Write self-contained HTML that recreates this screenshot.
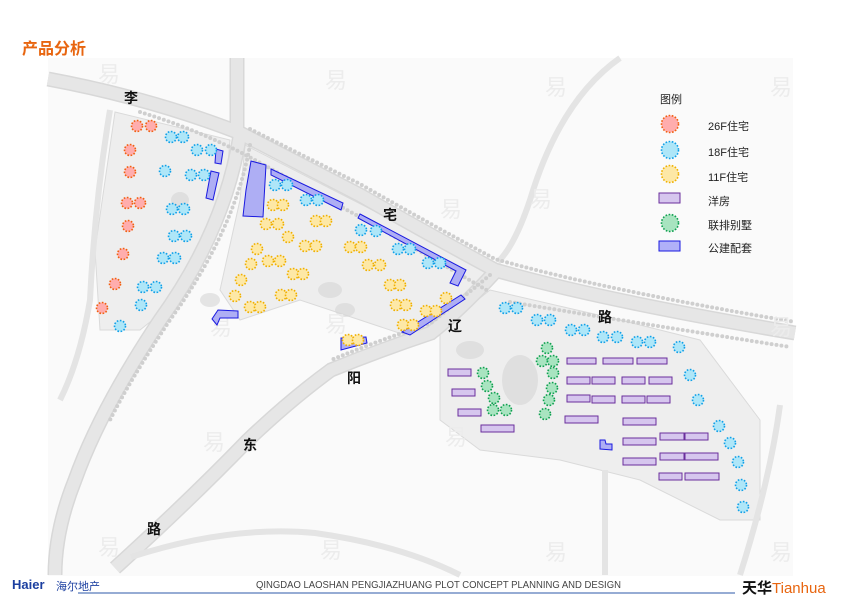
<!DOCTYPE html>
<html><head><meta charset="utf-8"><style>
body{margin:0;width:849px;height:600px;background:#fff;overflow:hidden;position:relative;font-family:"Liberation Sans","Noto Sans CJK SC",sans-serif}
.t{position:absolute;left:22px;top:35px;color:#e8650f;font-weight:bold;font-size:16px}
svg{position:absolute;left:0;top:0}
.lab{font-family:"Liberation Sans","Noto Sans CJK SC",sans-serif}
</style></head><body>
<svg width="849" height="600" viewBox="0 0 849 600">
<rect x="48" y="58" width="745" height="518" fill="#fafafa"/>
<!-- block areas -->
<g fill="#eeeeee" stroke="#dadada" stroke-width="1">
<path d="M115,112 L230,140 L225,200 L190,290 L140,330 L100,330 L95,250 Z"/>
<path d="M245,145 L490,270 L470,310 L420,340 L360,320 L300,300 L240,320 L220,290 L240,200 Z"/>
<path d="M440,330 L490,290 L620,320 L700,340 L760,420 L760,520 L720,520 L640,480 L560,460 L480,450 L440,420 Z"/>
</g>
<g fill="none">
<g stroke="#d8d8d8" stroke-width="15">
<path d="M48,79 Q150,98 240,133 L360,195 Q430,235 495,270 Q600,300 795,333"/>
<path d="M237,58 L237,135"/>
<path d="M240,135 Q225,230 160,320 Q100,410 75,480 Q55,530 55,575"/>
<path d="M495,272 Q460,310 431,333 Q380,350 331,370 Q290,400 248,440 Q190,500 115,568"/>
</g>
<g stroke="#e6e6e6" stroke-width="12">
<path d="M48,79 Q150,98 240,133 L360,195 Q430,235 495,270 Q600,300 795,333"/>
<path d="M237,58 L237,135"/>
<path d="M240,135 Q225,230 160,320 Q100,410 75,480 Q55,530 55,575"/>
<path d="M495,272 Q460,310 431,333 Q380,350 331,370 Q290,400 248,440 Q190,500 115,568"/>
</g>
<g stroke="#e4e4e4" stroke-width="6">
<path d="M620,58 Q560,100 530,200 Q515,245 498,262"/>
<path d="M131,557 Q230,525 315,533 Q400,545 460,575"/>
<path d="M110,110 Q95,200 90,300 Q80,360 60,400"/>
<path d="M605,470 L605,575"/>
<path d="M780,405 Q770,480 740,575"/>
</g>
<g stroke="#cfcfcf" stroke-width="4" stroke-linecap="round" stroke-dasharray="0 5">
<path transform="translate(0,12)" d="M140,100 Q190,115 240,140 L360,205 Q430,245 490,280"/>
<path transform="translate(0,-11)" d="M250,140 L360,195 Q430,235 495,270 Q600,300 795,333"/>
<path transform="translate(10,0)" d="M240,145 Q225,230 160,320 Q120,380 100,420"/>
<path transform="translate(0,-10)" d="M490,285 Q460,310 431,333 Q380,350 331,370"/>
<path transform="translate(0,12)" d="M510,290 Q600,305 790,335"/>
</g>
</g>
<g fill="#d6d6d6" opacity="0.6">
<ellipse cx="330" cy="290" rx="12" ry="8"/><ellipse cx="345" cy="310" rx="10" ry="7"/><ellipse cx="520" cy="380" rx="18" ry="25"/>
<ellipse cx="470" cy="350" rx="14" ry="9"/><ellipse cx="210" cy="300" rx="10" ry="7"/><ellipse cx="180" cy="200" rx="9" ry="8"/>
</g>
<!-- watermarks -->
<g fill="#ececec" font-size="22" class="lab">
<text x="98" y="82">易</text><text x="325" y="88">易</text><text x="545" y="95">易</text><text x="440" y="217">易</text>
<text x="530" y="207">易</text><text x="210" y="335">易</text><text x="325" y="332">易</text><text x="445" y="445">易</text>
<text x="203" y="450">易</text><text x="770" y="335">易</text><text x="98" y="555">易</text><text x="320" y="558">易</text><text x="545" y="560">易</text><text x="770" y="560">易</text><text x="770" y="95">易</text>
</g>
<g fill="#aeaef4" stroke="#1a1ae0" stroke-width="1">
<path d="M251,161 L266,165 L263,217 L243,216 L246,190 Z"/>
<path d="M271,169 L343,203 L341,210 L271,175 Z"/>
<path d="M360,214 L466,270 L458,286 L450,283 L456,271 L358,218 Z"/>
<path d="M216,149 L223,151 L221,164 L215,163 Z"/>
<path d="M211,171 L219,173 L213,200 L206,198 Z"/>
<path d="M461,295 L465,299 L410,335 L402,332 Z"/>
<path d="M218,310 L238,311 L238,318 L220,318 L217,325 L212,319 Z"/>
<path d="M341,338 L366,337 L367,343 L341,350 Z"/>
<path d="M600,440 L605,440 L606,444 L612,444 L612,450 L600,449 Z"/>
</g>
<g id="dots" stroke-dasharray="1.6 1.6" stroke-width="1.6"></g>
<g fill="#d6c6ee" stroke="#6a2f9c" stroke-width="1" id="yf"></g>
<g font-size="14" font-weight="bold" fill="#111" class="lab">
<text x="124" y="103">李</text><text x="383" y="220">宅</text><text x="598" y="322">路</text>
<text x="448" y="331">辽</text><text x="347" y="383">阳</text><text x="243" y="450">东</text><text x="147" y="534">路</text>
</g>
<g font-size="11" fill="#222" class="lab">
<text x="660" y="103">图例</text>
<text x="708" y="130">26F住宅</text><text x="708" y="156">18F住宅</text><text x="708" y="181">11F住宅</text>
<text x="708" y="205">洋房</text><text x="708" y="229">联排别墅</text><text x="708" y="252">公建配套</text>
</g>
<g stroke-dasharray="1.6 1.6" stroke-width="1.6">
<circle cx="670" cy="124" r="8.5" fill="#ffadad" stroke="#f06010"/>
<circle cx="670" cy="150" r="8.5" fill="#aee6f8" stroke="#10a0e8"/>
<circle cx="670" cy="174" r="8.5" fill="#fde8a6" stroke="#f0b000"/>
<circle cx="670" cy="223" r="8.5" fill="#a8e4c0" stroke="#10a050"/>
</g>
<rect x="659" y="193" width="21" height="10" fill="#d6c6ee" stroke="#6a2f9c"/>
<rect x="659" y="241" width="21" height="10" fill="#b0b0f8" stroke="#1a1ae0"/>
<line x1="78" y1="593" x2="735" y2="593" stroke="#2d5aa8" stroke-width="1"/>
</svg>
<div class="t">产品分析</div>
<div style="position:absolute;left:12px;top:577px;font-size:13px;font-weight:bold;color:#1b3fa0;font-family:'Liberation Sans',sans-serif">Haier</div>
<div style="position:absolute;left:56px;top:578px;font-size:11px;color:#1b3fa0">海尔地产</div>
<div style="position:absolute;left:256px;top:580px;font-size:10px;color:#444;font-family:'Liberation Sans',sans-serif;transform:scaleX(0.95);transform-origin:left">QINGDAO LAOSHAN PENGJIAZHUANG PLOT CONCEPT PLANNING AND DESIGN</div>
<div style="position:absolute;left:742px;top:577px;font-size:15px;font-weight:bold;color:#111">天华<span style="color:#e8650f;font-weight:normal">Tianhua</span></div>
<script>
var NS="http://www.w3.org/2000/svg";
var C={r:["#ffadad","#f06010"],b:["#aee6f8","#10a0e8"],y:["#fde8a6","#f0b000"],g:["#a8e4c0","#10a050"]};
var d={r:[[137,126],[151,126],[130,150],[130,172],[127,203],[140,203],[128,226],[123,254],[115,284],[102,308]],
b:[[171,137],[183,137],[197,150],[211,150],[191,175],[204,175],[165,171],[172,209],[184,209],[174,236],[186,236],[163,258],[175,258],[143,287],[156,287],[141,305],[120,326],[275,185],[287,185],[306,200],[318,200],[361,230],[376,231],[398,249],[410,249],[428,263],[440,263],
[505,308],[517,308],[537,320],[550,320],[571,330],[584,330],[603,337],[617,337],[637,342],[650,342],[679,347],[690,375],[698,400],[719,426],[730,443],[738,462],[741,485],[743,507]],
y:[[273,205],[283,205],[266,224],[278,224],[288,237],[316,221],[326,221],[305,246],[316,246],[257,249],[251,264],[268,261],[280,261],[293,274],[303,274],[241,280],[281,295],[291,295],[235,296],[250,307],[260,307],[350,247],[361,247],[368,265],[380,265],[390,285],[400,285],[396,305],[406,305],[426,311],[436,311],[403,325],[413,325],[446,298],[348,340],[358,340]],
g:[[547,348],[542,361],[553,361],[553,373],[552,388],[549,400],[545,414],[483,373],[487,386],[494,398],[493,410],[506,410]]};
var g=document.getElementById("dots");
for(var k in d)d[k].forEach(function(p){var c=document.createElementNS(NS,"circle");c.setAttribute("cx",p[0]);c.setAttribute("cy",p[1]);c.setAttribute("r",5.5);c.setAttribute("fill",C[k][0]);c.setAttribute("stroke",C[k][1]);g.appendChild(c);});
var R=[[567,358,29,6],[603,358,30,6],[637,358,30,6],[567,377,23,7],[592,377,23,7],[622,377,23,7],[649,377,23,7],[567,395,23,7],[592,396,23,7],[622,396,23,7],[647,396,23,7],[565,416,33,7],[448,369,23,7],[452,389,23,7],[458,409,23,7],[481,425,33,7],[623,418,33,7],[623,438,33,7],[623,458,33,7],[660,433,24,7],[685,433,23,7],[660,453,24,7],[685,453,33,7],[659,473,23,7],[685,473,34,7]];
var y=document.getElementById("yf");
R.forEach(function(r){var e=document.createElementNS(NS,"rect");e.setAttribute("x",r[0]);e.setAttribute("y",r[1]);e.setAttribute("width",r[2]);e.setAttribute("height",r[3]);y.appendChild(e);});
</script>
</body></html>
